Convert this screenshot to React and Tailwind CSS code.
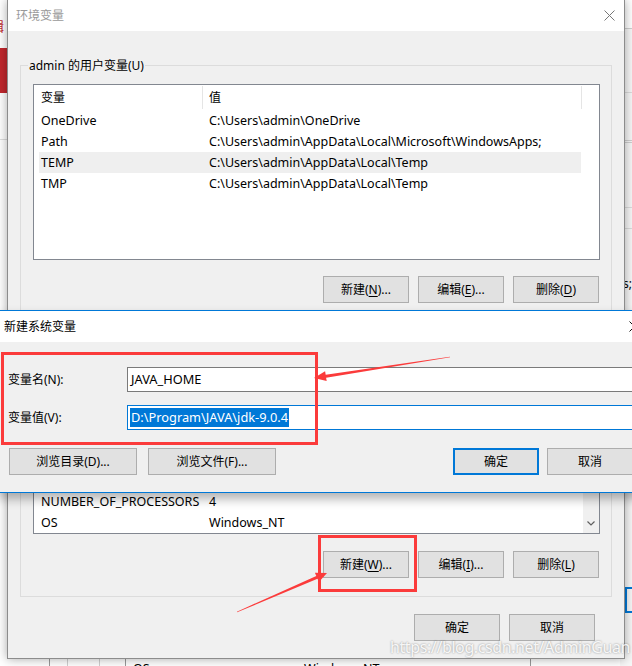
import React from "react";

const userVars = [
  ["OneDrive", "C:\\Users\\admin\\OneDrive"],
  ["Path", "C:\\Users\\admin\\AppData\\Local\\Microsoft\\WindowsApps;"],
  ["TEMP", "C:\\Users\\admin\\AppData\\Local\\Temp"],
  ["TMP", "C:\\Users\\admin\\AppData\\Local\\Temp"],
];

const systemVars = [
  ["ComSpec", "C:\\WINDOWS\\system32\\cmd.exe"],
  ["DriverData", "C:\\Windows\\System32\\Drivers\\DriverData"],
  ["NUMBER_OF_PROCESSORS", "4"],
  ["OS", "Windows_NT"],
];

const Key = ({ k }) => <span className="underline underline-offset-2">{k}</span>;

const CloseIcon = ({ className = "", color = "#777" }) => (
  <svg width="11" height="11" viewBox="0 0 11 11" className={className}>
    <path d="M0.5 0.5 L10.5 10.5 M10.5 0.5 L0.5 10.5" stroke={color} strokeWidth="1" fill="none" />
  </svg>
);

const WinButton = ({ children, width = "w-[86px]", primary = false, className = "" }) => (
  <div
    className={`flex h-[27px] shrink-0 items-center justify-center bg-[#e1e1e1] text-[12px] text-black ${width} ${
      primary ? "border-2 border-[#0078d7]" : "border border-[#adadad]"
    } ${className}`}
  >
    {children}
  </div>
);

const GroupBox = ({ label, className = "", children }) => (
  <div className={`relative shrink-0 border border-[#dcdcdc] pl-[12px] pt-[18px] ${className}`}>
    <span className="absolute left-[7px] top-[-8px] bg-[#f0f0f0] px-[1px] text-[12px] leading-[16px]">{label}</span>
    {children}
  </div>
);

const ListView = ({ rows, selected = -1, height, scrollbar = false, bottom = false }) => (
  <div className={`flex w-[567px] border border-[#828790] bg-white ${height}`}>
    <div className="flex w-[548px] flex-col">
      <div className="flex h-[25px] shrink-0 items-center text-[12px]">
        <div className="w-[168px] pl-[7px]">变量</div>
        <div className="h-[23px] w-px bg-[#e5e5e5]" />
        <div className="flex-1 pl-[6px]">值</div>
        <div className="h-[23px] w-px bg-[#e5e5e5]" />
      </div>
      <div className={`flex flex-1 flex-col ${bottom ? "justify-end" : ""}`}>
        {rows.map(([name, value], i) => (
          <div
            key={name}
            className={`ml-[5px] flex h-[21px] w-[542px] shrink-0 items-center text-[12.5px] leading-[21px] ${
              i === selected ? "bg-[#efefef]" : ""
            }`}
          >
            <div className="w-[170px] pl-[2px]">{name}</div>
            <div className="whitespace-nowrap">{value}</div>
          </div>
        ))}
      </div>
    </div>
    <div className="flex flex-1 flex-col items-end">
      {scrollbar && (
        <div className="flex h-full w-[16px] flex-col items-center justify-end bg-[#f0f0f0] pb-[7px]">
          <svg width="8" height="5" viewBox="0 0 8 5">
            <path d="M0.5 0.5 L4 4 L7.5 0.5" stroke="#606060" strokeWidth="1.2" fill="none" />
          </svg>
        </div>
      )}
    </div>
  </div>
);

const App = () => {
  return (
    <div className="relative h-[666px] w-[632px] overflow-hidden bg-white font-['Noto_Sans','Noto_Sans_CJK_SC',sans-serif] text-black">
      {/* window behind, left strip */}
      <span className="absolute left-[-9px] top-[17px] text-[13px] text-[#c1272d]">辑</span>
      <div className="absolute left-0 top-[48px] h-[45px] w-[10px] bg-[#c1272d]" />
      <div className="absolute left-0 top-[139px] h-px w-[10px] bg-[#dedede]" />

      {/* window behind, right strip */}
      <div className="absolute right-0 top-0 flex h-[666px] w-[12px] flex-col bg-[#f7f7f7]">
        <div className="h-[28px] bg-white" />
        <div className="h-px bg-[#d0d0d0]" />
        <div className="mt-[63px] h-px bg-[#dcdcdc]" />
        <div className="mt-[47px] h-px bg-[#cfcfcf]" />
        <div className="mt-px h-px bg-[#cfcfcf]" />
        <div className="mt-[64px] h-px bg-[#dcdcdc]" />
        <div className="mt-[20px] h-px bg-[#dcdcdc]" />
        <div className="mt-[48px] pl-[3px] text-[12px] leading-[14px]">s;</div>
      </div>
      <div className="absolute left-[625px] top-[587px] h-[26px] w-[20px] border-2 border-[#0078d7]" />

      {/* list of the window behind, at the bottom */}
      <div className="absolute left-[49px] top-[652px] flex h-[24px] w-[482px] border border-[#9a9a9a] bg-white text-[12.5px] leading-[12px]">
        <div className="h-full w-[18px] border-r border-[#d0d0d0]" />
        <div className="h-full w-[32px] border-r border-[#d0d0d0]" />
        <div className="h-full w-[26px] border-r border-[#9a9a9a]" />
        <div className="w-[178px] pl-[7px] pt-[10px]">OS</div>
        <div className="pt-[10px]">Windows_NT</div>
      </div>

      {/* 环境变量 */}
      <div className="absolute left-[7px] top-0 flex h-[659px] w-[618px] flex-col border-x border-b border-[#8c8c8c] bg-[#f0f0f0] shadow-[0_0_10px_rgba(0,0,0,0.35)]">
        <div className="flex h-[31px] shrink-0 items-center bg-white pl-[8px] text-[12px] text-[#999]">
          环境变量
          <CloseIcon className="ml-auto mr-[9px]" />
        </div>
        <div className="flex flex-1 flex-col px-[12px] pt-[34px]">
          <GroupBox label="admin 的用户变量(U)" className="h-[253px]">
            <ListView rows={userVars} selected={2} height="h-[176px]" />
            <div className="mt-[16px] flex w-[566px] justify-end gap-[9px]">
              <WinButton>
                新建(<Key k="N" />)...
              </WinButton>
              <WinButton>
                编辑(<Key k="E" />)...
              </WinButton>
              <WinButton>
                删除(<Key k="D" />)
              </WinButton>
            </div>
          </GroupBox>

          <GroupBox label="系统变量(S)" className="mt-[10px] h-[269px]">
            <ListView rows={systemVars} height="h-[187px]" scrollbar bottom />
            <div className="mt-[17px] flex w-[566px] justify-end gap-[9px]">
              <WinButton>
                新建(<Key k="W" />)...
              </WinButton>
              <WinButton>
                编辑(<Key k="I" />)...
              </WinButton>
              <WinButton>
                删除(<Key k="L" />)
              </WinButton>
            </div>
          </GroupBox>

          <div className="mt-[17px] flex justify-end gap-[9px] pr-[17px]">
            <WinButton>确定</WinButton>
            <WinButton>取消</WinButton>
          </div>
        </div>
      </div>

      {/* 新建系统变量 */}
      <div className="absolute left-[-1px] top-[310px] flex h-[183px] w-[658px] flex-col border border-[#0078d7] bg-[#f0f0f0] shadow-[0_6px_10px_rgba(0,0,0,0.3)]">
        <div className="flex h-[31px] shrink-0 items-center bg-white pl-[4px] text-[12px]">
          新建系统变量
          <CloseIcon className="ml-auto mr-[16px]" color="#111" />
        </div>
        <div className="flex flex-col pl-[8px] pt-[25px] text-[12px]">
          <div className="flex items-center">
            <div className="w-[119px]">变量名(N):</div>
            <div className="flex h-[25px] w-[507px] items-center border border-[#7a7a7a] bg-white pl-[3px] text-[12.8px]">
              JAVA_HOME
            </div>
          </div>
          <div className="mt-[13px] flex items-center">
            <div className="w-[119px]">变量值(V):</div>
            <div className="flex h-[25px] w-[507px] items-center border border-[#0078d7] bg-white pl-[2px] text-[12.8px]">
              <span className="bg-[#0078d7] px-px leading-[19px] text-white">D:\Program\JAVA\jdk-9.0.4</span>
            </div>
          </div>
          <div className="ml-px mt-[18px] flex">
            <WinButton width="w-[128px]">浏览目录(D)...</WinButton>
            <WinButton width="w-[128px]" className="ml-[11px]">
              浏览文件(F)...
            </WinButton>
            <WinButton primary className="ml-[177px]">
              确定
            </WinButton>
            <WinButton className="ml-[8px]">取消</WinButton>
          </div>
        </div>
      </div>

      {/* annotations */}
      <div className="absolute left-[1px] top-[352px] h-[93px] w-[317px] border-[3px] border-[#fb3b3b]" />
      <div className="absolute left-[318px] top-[535px] h-[57px] w-[99px] border-[3px] border-[#fb3b3b]" />
      <svg className="pointer-events-none absolute left-0 top-0" width="632" height="666" viewBox="0 0 632 666">
        <polygon
          points="449.9,356.7 325.7,374.7 325.1,371.3 314,378 326.7,381.1 326.1,377.7 450.1,357.3"
          fill="#fb3b3b"
        />
        <polygon
          points="236.9,611.7 316.3,576 314.9,572.8 327,573 318.9,582 317.5,578.8 237.1,612.3"
          fill="#fb3b3b"
        />
      </svg>

      {/* watermark */}
      <div className="pointer-events-none absolute left-[390px] top-[636px] whitespace-nowrap text-[16px] leading-[22px] tracking-[-0.4px] text-white/90 [text-shadow:0_0_2px_rgba(0,0,0,0.45)]">
        https://blog.csdn.net/AdminGuan
      </div>
    </div>
  );
};

export default App;
